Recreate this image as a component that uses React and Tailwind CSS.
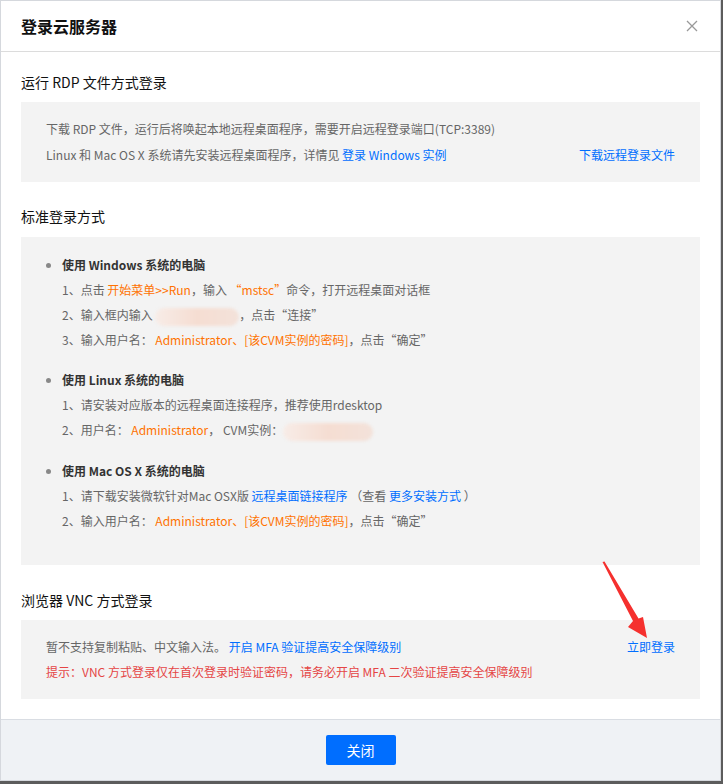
import React from "react";

const F = { fontFamily: '"Noto Sans CJK SC", "Noto Sans", sans-serif' };

function Blur({ w }) {
  return (
    <span
      className="inline-block align-middle h-[18px] rounded-full blur-[1.5px] bg-gradient-to-r from-[#f7ece7] via-[#f5ddd2] to-[#f3e2da]"
      style={{ width: w }}
    />
  );
}

function Bullet({ children }) {
  return (
    <div className="flex items-center h-[24px] text-[12px] font-bold text-[#333]">
      <span className="w-[5px] h-[5px] rounded-full bg-[#888] ml-[25px] mr-[11px]" />
      <span>{children}</span>
    </div>
  );
}

function Item({ children }) {
  return (
    <div className="h-[25px] leading-[25px] pl-[41px] text-[12px] text-[#666] whitespace-nowrap">
      {children}
    </div>
  );
}

const O = ({ children }) => <span className="text-[#ff7200]">{children}</span>;
const B = ({ children }) => <span className="text-[#006eff]">{children}</span>;

export default function App() {
  return (
    <div className="relative w-[723px] h-[784px] overflow-hidden bg-[#5c5c5c]" style={F}>
      <div className="w-[721px] h-[781px] bg-white border border-[#d5d8dd] flex flex-col">
        <div className="h-[51px] shrink-0 border-b border-[#dcdcdc] flex items-center justify-between pl-[20px] pr-[22px]">
          <span className="text-[16px] font-semibold text-[#111]">登录云服务器</span>
          <svg width="12" height="12" viewBox="0 0 12 12" className="text-[#999]">
            <path d="M1 1L11 11M11 1L1 11" stroke="currentColor" strokeWidth="1.3" />
          </svg>
        </div>

        <div className="flex-1 px-[20px] pt-[20px]">
          <div className="h-[20px] leading-[20px] text-[14px] text-[#111]">运行 RDP 文件方式登录</div>
          <div className="mt-[10px] bg-[#f3f3f3] px-[25px] py-[14px] text-[12px] text-[#666]">
            <div className="h-[26px] leading-[26px]">
              下载 RDP 文件，运行后将唤起本地远程桌面程序，需要开启远程登录端口(TCP:3389)
            </div>
            <div className="h-[26px] leading-[26px] flex justify-between">
              <span>
                Linux 和 Mac OS X 系统请先安装远程桌面程序，详情见 <B>登录 Windows 实例</B>
              </span>
              <B>下载远程登录文件</B>
            </div>
          </div>

          <div className="mt-[24px] h-[20px] leading-[20px] text-[14px] text-[#111]">标准登录方式</div>
          <div className="mt-[11px] bg-[#f3f3f3] pt-[16px] pb-[32px]">
            <Bullet>使用 Windows 系统的电脑</Bullet>
            <Item>
              1、点击 <O>开始菜单&gt;&gt;Run</O>，输入 <O>“mstsc”</O>命令，打开远程桌面对话框
            </Item>
            <Item>
              2、输入框内输入 <Blur w={84} />，点击“连接”
            </Item>
            <Item>
              3、输入用户名： <O>Administrator、[该CVM实例的密码]</O>，点击“确定”
            </Item>

            <div className="mt-[16px]">
              <Bullet>使用 Linux 系统的电脑</Bullet>
            </div>
            <Item>1、请安装对应版本的远程桌面连接程序，推荐使用rdesktop</Item>
            <Item>
              2、用户名： <O>Administrator</O>， CVM实例：<Blur w={90} />
            </Item>

            <div className="mt-[17px]">
              <Bullet>使用 Mac OS X 系统的电脑</Bullet>
            </div>
            <Item>
              1、请下载安装微软针对Mac OSX版 <B>远程桌面链接程序</B> （查看 <B>更多安装方式</B> ）
            </Item>
            <Item>
              2、输入用户名： <O>Administrator、[该CVM实例的密码]</O>，点击“确定”
            </Item>
          </div>

          <div className="mt-[25px] h-[20px] leading-[20px] text-[14px] text-[#111]">浏览器 VNC 方式登录</div>
          <div className="mt-[10px] bg-[#f3f3f3] px-[25px] pt-[14px] pb-[15px] text-[12px]">
            <div className="h-[25px] leading-[25px] flex justify-between text-[#666]">
              <span>
                暂不支持复制粘贴、中文输入法。 <B>开启 MFA 验证提高安全保障级别</B>
              </span>
              <B>立即登录</B>
            </div>
            <div className="h-[25px] leading-[25px] text-[#e54545]">
              提示：VNC 方式登录仅在首次登录时验证密码，请务必开启 MFA 二次验证提高安全保障级别
            </div>
          </div>
        </div>

        <div className="h-[61px] shrink-0 border-t border-[#d9dde3] bg-[#eff2f5] flex justify-center pt-[15px]">
          <button className="w-[70px] h-[30px] rounded-[2px] bg-[#006eff] text-white text-[14px]">关闭</button>
        </div>
      </div>

      <svg className="absolute left-0 top-0 pointer-events-none" width="723" height="784">
        <path d="M602.5 562 L633 621 L628 627 L647 638 L643 617 L638.5 618.5 L604.5 561.5 Z" fill="#f5302e" />
      </svg>
    </div>
  );
}
